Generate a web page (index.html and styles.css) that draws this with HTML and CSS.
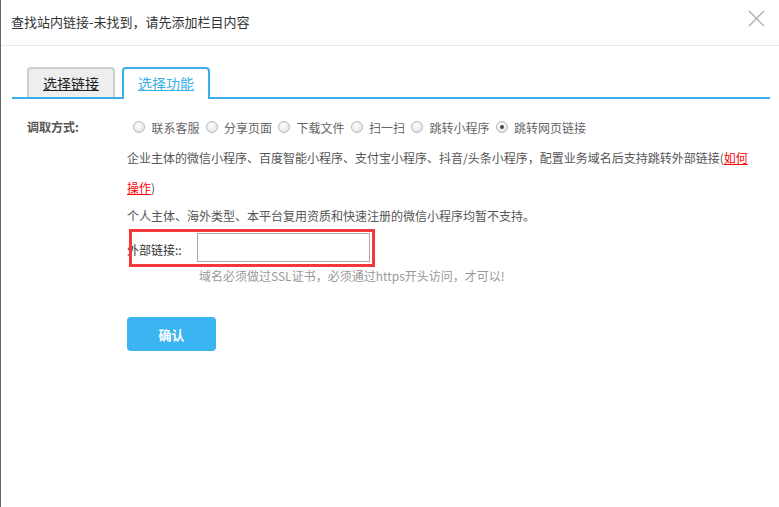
FILE: index.html
```html
<!DOCTYPE html>
<html lang="zh-CN">
<head>
    <meta charset="UTF-8">
    <title>查找站内链接</title>
    <link rel="stylesheet" href="styles.css">
</head>
<body>
    <div class="dialog">
        <div class="dialog-header">
            <span class="dialog-title">查找站内链接-未找到，请先添加栏目内容</span>
            <svg class="close" width="17" height="17" viewBox="0 0 17 17">
                <path d="M1 1 L16 16 M16 1 L1 16" stroke="#a8a8a8" stroke-width="1.2" fill="none"/>
            </svg>
        </div>

        <div class="tabs">
            <a href="#" class="tab">选择链接</a>
            <a href="#" class="tab active">选择功能</a>
        </div>

        <div class="form">
            <div class="form-row">
                <div class="form-label">调取方式:</div>
                <div class="form-body">
                    <div class="radio-group">
                        <span class="radio"></span><span class="radio-text">联系客服</span>
                        <span class="radio"></span><span class="radio-text">分享页面</span>
                        <span class="radio"></span><span class="radio-text">下载文件</span>
                        <span class="radio"></span><span class="radio-text">扫一扫</span>
                        <span class="radio"></span><span class="radio-text">跳转小程序</span>
                        <span class="radio checked"></span><span class="radio-text">跳转网页链接</span>
                    </div>

                    <p class="desc">企业主体的微信小程序、百度智能小程序、支付宝小程序、抖音/头条小程序，配置业务域名后支持跳转外部链接(<a href="#" class="red-link">如何</a><br><a href="#" class="red-link">操作</a>)</p>
                    <p class="desc desc-short">个人主体、海外类型、本平台复用资质和快速注册的微信小程序均暂不支持。</p>

                    <div class="link-row">
                        <span class="link-label">外部链接::</span>
                        <input type="text" class="link-input">
                        <div class="mark-box"></div>
                    </div>
                    <p class="hint">域名必须做过SSL证书，必须通过https开头访问，才可以!</p>

                    <button class="btn-confirm">确认</button>
                </div>
            </div>
        </div>
    </div>
</body>
</html>
```

FILE: styles.css
```css
* {
    margin: 0;
    padding: 0;
    box-sizing: border-box;
}

body {
    font-family: "Noto Sans CJK SC", "Liberation Sans", sans-serif;
    font-size: 12px;
    color: #333;
    background: #fff;
    width: 779px;
    height: 507px;
    overflow: hidden;
}

.dialog {
    height: 507px;
    border-left: 1px solid #666;
}

.dialog-header {
    height: 46px;
    border-bottom: 1px solid #e8e8e8;
    display: flex;
    align-items: center;
    justify-content: space-between;
    padding: 0 14px 0 10px;
}

.dialog-title {
    font-size: 13px;
    color: #333;
    margin-top: -2px;
}

.close {
    margin-top: -8px;
}

.tabs {
    display: flex;
    align-items: flex-end;
    margin: 21px 9px 0 11px;
    padding-left: 15px;
    border-bottom: 2px solid #3aaeea;
    height: 32px;
}

.tab {
    width: 88px;
    height: 30px;
    display: flex;
    align-items: center;
    justify-content: center;
    font-size: 14px;
    color: #222;
    text-decoration: underline;
    background: #eee;
    border: 2px solid #ccc;
    border-bottom: none;
    border-radius: 4px 4px 0 0;
}

.tab.active {
    margin-left: 7px;
    height: 32px;
    margin-bottom: -2px;
    background: #fff;
    color: #3aaeea;
    border-color: #3aaeea;
    padding-bottom: 2px;
}

.form {
    padding: 19px 0 0 26px;
}

.form-row {
    display: flex;
}

.form-label {
    width: 100px;
    font-weight: bold;
    color: #555;
    line-height: 18px;
}

.form-body {
    flex: 1;
    padding-right: 20px;
}

.radio-group {
    display: flex;
    align-items: center;
    height: 18px;
    color: #666;
}

.radio {
    width: 12px;
    height: 12px;
    border-radius: 50%;
    border: 1px solid #b8b8b8;
    background: radial-gradient(circle at 40% 35%, #fff, #dcdcdc);
    margin: 0 6.5px 0 6px;
    position: relative;
}

.radio.checked::after {
    content: "";
    position: absolute;
    left: 3px;
    top: 3px;
    width: 4px;
    height: 4px;
    border-radius: 50%;
    background: #444;
}

.desc {
    color: #555;
    line-height: 30px;
    margin-top: 7px;
}

.desc-short {
    line-height: 26px;
    margin-top: 0;
}

.red-link {
    color: #f00;
}

.link-row {
    display: flex;
    align-items: center;
    position: relative;
    margin-top: 4px;
    height: 29px;
}

.link-label {
    width: 70px;
    color: #333;
    padding-top: 3px;
}

.link-input {
    width: 173px;
    height: 29px;
    border: 1px solid #aaa;
    outline: none;
}

.mark-box {
    position: absolute;
    left: 2px;
    top: -4px;
    width: 246px;
    height: 38px;
    border: 3px solid #f2383a;
}

.hint {
    color: #999;
    padding-left: 72px;
    margin-top: 5px;
    line-height: 18px;
}

.btn-confirm {
    margin-top: 32px;
    width: 89px;
    height: 34px;
    border: none;
    border-radius: 4px;
    background: #3bb4f2;
    color: #fff;
    font-family: inherit;
    font-size: 13px;
    font-weight: bold;
}
```
